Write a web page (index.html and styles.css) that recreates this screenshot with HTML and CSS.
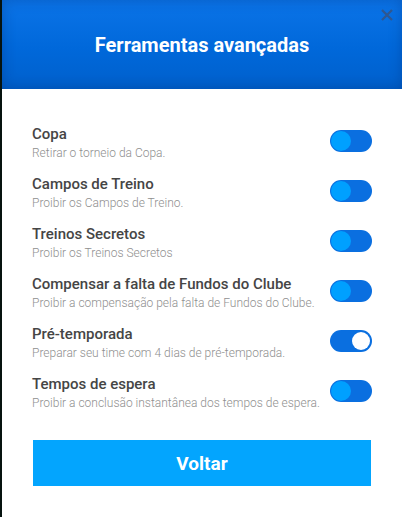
FILE: index.html
```html
<!DOCTYPE html>
<html lang="pt">
<head>
<meta charset="utf-8">
<title>Ferramentas avançadas</title>
<link rel="stylesheet" href="styles.css">
</head>
<body>
<div class="modal">
  <div class="header">
    <h1 class="title">Ferramentas avançadas</h1>
    <button class="close" aria-label="Fechar">
      <svg width="12" height="12" viewBox="0 0 12 12"><path d="M1 1 L11 11 M11 1 L1 11" stroke="currentColor" stroke-width="2.2" fill="none"/></svg>
    </button>
  </div>
  <div class="content">
    <div class="list">
      <div class="row">
        <div class="text"><div class="name">Copa</div><div class="desc">Retirar o torneio da Copa.</div></div>
        <span class="toggle"><span class="knob"></span></span>
      </div>
      <div class="row">
        <div class="text"><div class="name">Campos de Treino</div><div class="desc">Proibir os Campos de Treino.</div></div>
        <span class="toggle"><span class="knob"></span></span>
      </div>
      <div class="row">
        <div class="text"><div class="name">Treinos Secretos</div><div class="desc">Proibir os Treinos Secretos</div></div>
        <span class="toggle"><span class="knob"></span></span>
      </div>
      <div class="row">
        <div class="text"><div class="name">Compensar a falta de Fundos do Clube</div><div class="desc">Proibir a compensação pela falta de Fundos do Clube.</div></div>
        <span class="toggle"><span class="knob"></span></span>
      </div>
      <div class="row">
        <div class="text"><div class="name">Pré-temporada</div><div class="desc">Preparar seu time com 4 dias de pré-temporada.</div></div>
        <span class="toggle on"><span class="knob"></span></span>
      </div>
      <div class="row">
        <div class="text"><div class="name">Tempos de espera</div><div class="desc">Proibir a conclusão instantânea dos tempos de espera.</div></div>
        <span class="toggle"><span class="knob"></span></span>
      </div>
    </div>
    <button class="back">Voltar</button>
  </div>
</div>
</body>
</html>
```

FILE: styles.css
```css
html, body {
  margin: 0;
  padding: 0;
}
body {
  background: #06130f;
  font-family: Roboto, "Liberation Sans", Arial, sans-serif;
}
.modal {
  margin-left: 2px;
  width: 400px;
  height: 517px;
  background: #ffffff;
}
.header {
  position: relative;
  height: 89px;
  display: flex;
  align-items: center;
  justify-content: center;
  background: linear-gradient(180deg, #0b74e8 0%, #0068da 55%, #0060cc 100%);
  box-shadow: inset 0 0 14px rgba(0, 30, 90, 0.28);
}
.title {
  margin: 0;
  color: #ffffff;
  font-size: 20px;
  font-weight: 700;
  line-height: 24px;
}
.close {
  position: absolute;
  top: 9px;
  right: 9px;
  width: 12px;
  height: 12px;
  padding: 0;
  border: 0;
  background: none;
  color: #30578f;
  display: flex;
}
.content {
  padding: 37px 30px 0 30px;
}
.list {
  display: flex;
  flex-direction: column;
  gap: 16px;
}
.row {
  display: flex;
  justify-content: space-between;
  align-items: flex-start;
}
.name {
  font-size: 15px;
  font-weight: 500;
  line-height: 17px;
  color: #454545;
  margin-bottom: 3px;
}
.desc {
  font-size: 12px;
  font-weight: 300;
  line-height: 14px;
  color: #8f8f8f;
}
.toggle {
  margin-top: 4px;
  width: 42px;
  height: 22px;
  border-radius: 11px;
  background: #0a6fe0;
  display: flex;
  align-items: center;
  padding: 0 1px;
  box-sizing: border-box;
  flex-shrink: 0;
}
.knob {
  width: 20px;
  height: 20px;
  border-radius: 50%;
  background: #00a0ff;
}
.toggle.on {
  justify-content: flex-end;
  padding: 0 2px;
}
.toggle.on .knob {
  width: 18px;
  height: 18px;
  background: #ffffff;
}
.back {
  display: block;
  margin: 30px 1px 0 1px;
  width: 338px;
  height: 46px;
  border: 0;
  background: #03a5fe;
  color: #ffffff;
  font-family: Roboto, "Liberation Sans", Arial, sans-serif;
  font-size: 19px;
  font-weight: 700;
}
```
